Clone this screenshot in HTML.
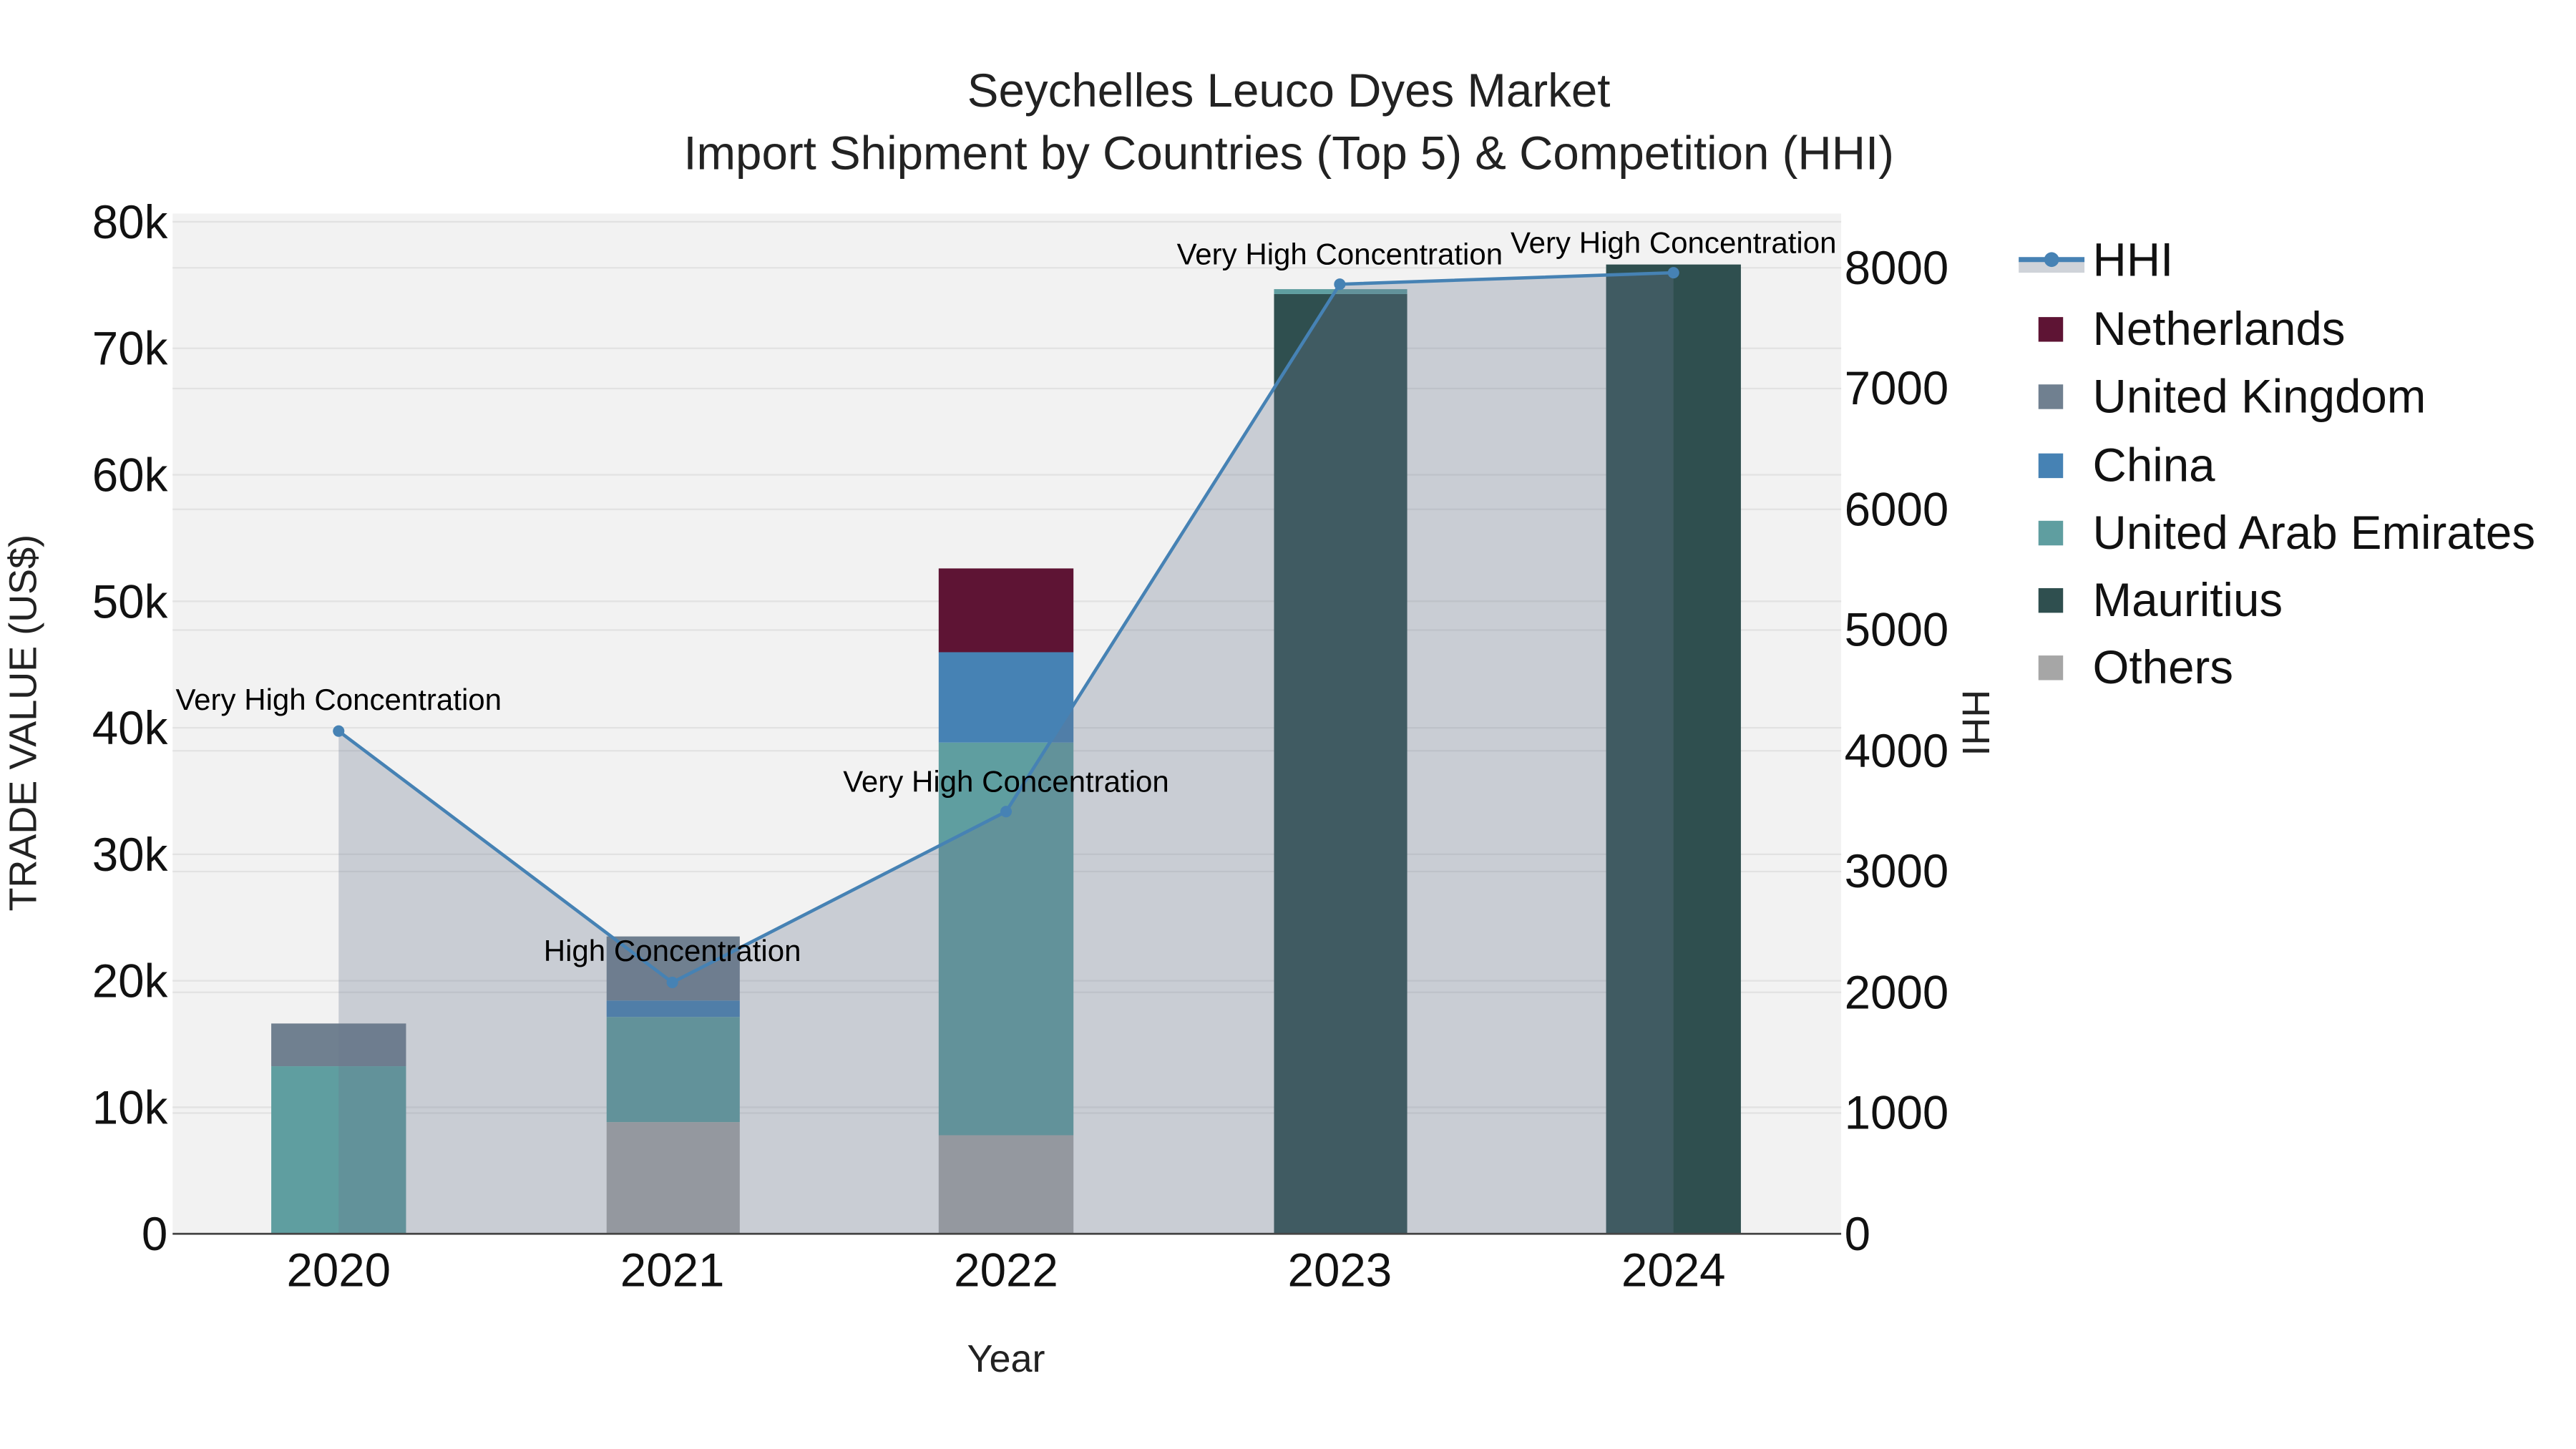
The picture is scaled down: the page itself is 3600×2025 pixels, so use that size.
<!DOCTYPE html>
<html><head><meta charset="utf-8"><style>html,body{margin:0;padding:0;background:#fff}svg{display:block}</style></head>
<body>
<svg width="3600" height="2025" viewBox="0 0 1567 882" preserveAspectRatio="none" xmlns="http://www.w3.org/2000/svg" font-family="Liberation Sans, Arial, sans-serif">
<rect width="1567" height="882" fill="#fff"/>
<rect x="105" y="130" width="1015" height="621" fill="#f2f2f2"/>
<g stroke="#e2e2e2" stroke-width="1">
<line x1="105" x2="1120" y1="674" y2="674"/><line x1="105" x2="1120" y1="597" y2="597"/><line x1="105" x2="1120" y1="520" y2="520"/><line x1="105" x2="1120" y1="443" y2="443"/><line x1="105" x2="1120" y1="366" y2="366"/><line x1="105" x2="1120" y1="289" y2="289"/><line x1="105" x2="1120" y1="212" y2="212"/><line x1="105" x2="1120" y1="135" y2="135"/>
<line x1="105" x2="1120" y1="677.5" y2="677.5"/><line x1="105" x2="1120" y1="604" y2="604"/><line x1="105" x2="1120" y1="530.5" y2="530.5"/><line x1="105" x2="1120" y1="457" y2="457"/><line x1="105" x2="1120" y1="383.5" y2="383.5"/><line x1="105" x2="1120" y1="310" y2="310"/><line x1="105" x2="1120" y1="236.5" y2="236.5"/><line x1="105" x2="1120" y1="163" y2="163"/>
</g>
<rect x="165" y="649" width="82" height="102" fill="#5f9ea0"/>
<rect x="165" y="623" width="82" height="26" fill="#708090"/>
<rect x="369" y="683" width="81" height="68" fill="#a6a6a6"/>
<rect x="369" y="619" width="81" height="64" fill="#5f9ea0"/>
<rect x="369" y="609" width="81" height="10" fill="#4682b4"/>
<rect x="369" y="570" width="81" height="39" fill="#708090"/>
<rect x="571" y="691" width="82" height="60" fill="#a6a6a6"/>
<rect x="571" y="452" width="82" height="239" fill="#5f9ea0"/>
<rect x="571" y="397" width="82" height="55" fill="#4682b4"/>
<rect x="571" y="346" width="82" height="51" fill="#5e1434"/>
<rect x="775" y="179" width="81" height="572" fill="#2f4f4f"/>
<rect x="775" y="176" width="81" height="3" fill="#5f9ea0"/>
<rect x="977" y="161" width="82" height="590" fill="#2f4f4f"/>
<polygon points="206,751 206,445 409,598 612,494 815,173 1018,166 1018,751" fill="rgb(105,119,142)" fill-opacity="0.3"/>
<line x1="105" x2="1120" y1="751" y2="751" stroke="#444" stroke-width="1.2"/>
<polyline points="206,445 409,598 612,494 815,173 1018,166" fill="none" stroke="#4682b4" stroke-width="2"/>
<g fill="#4682b4"><circle cx="206" cy="445" r="3.5"/><circle cx="409" cy="598" r="3.5"/><circle cx="612" cy="494" r="3.5"/><circle cx="815" cy="173" r="3.5"/><circle cx="1018" cy="166" r="3.5"/></g>
<g font-size="18.3" fill="#000" text-anchor="middle">
<text x="206" y="432">Very High Concentration</text>
<text x="409" y="585">High Concentration</text>
<text x="612" y="482">Very High Concentration</text>
<text x="815" y="161">Very High Concentration</text>
<text x="1018" y="154">Very High Concentration</text>
</g>
<g font-size="28.5" fill="#222" text-anchor="middle">
<text x="784" y="65">Seychelles Leuco Dyes Market</text>
<text x="784" y="103">Import Shipment by Countries (Top 5) &amp; Competition (HHI)</text>
</g>
<g font-size="28.5" fill="#111" text-anchor="end">
<text x="102" y="761">0</text><text x="102" y="684">10k</text><text x="102" y="607">20k</text><text x="102" y="530">30k</text><text x="102" y="453">40k</text><text x="102" y="376">50k</text><text x="102" y="299">60k</text><text x="102" y="222">70k</text><text x="102" y="145">80k</text>
</g>
<g font-size="28.5" fill="#111">
<text x="1122" y="761">0</text><text x="1122" y="687">1000</text><text x="1122" y="614">2000</text><text x="1122" y="540">3000</text><text x="1122" y="467">4000</text><text x="1122" y="393">5000</text><text x="1122" y="320">6000</text><text x="1122" y="246">7000</text><text x="1122" y="173">8000</text>
</g>
<g font-size="28.5" fill="#111" text-anchor="middle">
<text x="206" y="783">2020</text><text x="409" y="783">2021</text><text x="612" y="783">2022</text><text x="815" y="783">2023</text><text x="1018" y="783">2024</text>
</g>
<text x="612" y="835" font-size="23.5" fill="#222" text-anchor="middle">Year</text>
<text transform="translate(22,440) rotate(-90)" font-size="23.5" fill="#222" text-anchor="middle">TRADE VALUE (US$)</text>
<text transform="translate(1194,440) rotate(90)" font-size="23.5" fill="#222" text-anchor="middle">HHI</text>
<rect x="1228" y="158" width="40" height="8" fill="#cfd3d9"/>
<line x1="1228" x2="1268" y1="158" y2="158" stroke="#4682b4" stroke-width="3"/>
<circle cx="1248" cy="158" r="4.5" fill="#4682b4"/>
<g font-size="28.5" fill="#111">
<text x="1273" y="168">HHI</text><text x="1273" y="210">Netherlands</text><text x="1273" y="251">United Kingdom</text><text x="1273" y="293">China</text><text x="1273" y="334">United Arab Emirates</text><text x="1273" y="375">Mauritius</text><text x="1273" y="416">Others</text>
</g>
<rect x="1240" y="193" width="15" height="15" fill="#5e1434"/>
<rect x="1240" y="234" width="15" height="15" fill="#708090"/>
<rect x="1240" y="276" width="15" height="15" fill="#4682b4"/>
<rect x="1240" y="317" width="15" height="15" fill="#5f9ea0"/>
<rect x="1240" y="358" width="15" height="15" fill="#2f4f4f"/>
<rect x="1240" y="399" width="15" height="15" fill="#a6a6a6"/>
</svg>
</body></html>
